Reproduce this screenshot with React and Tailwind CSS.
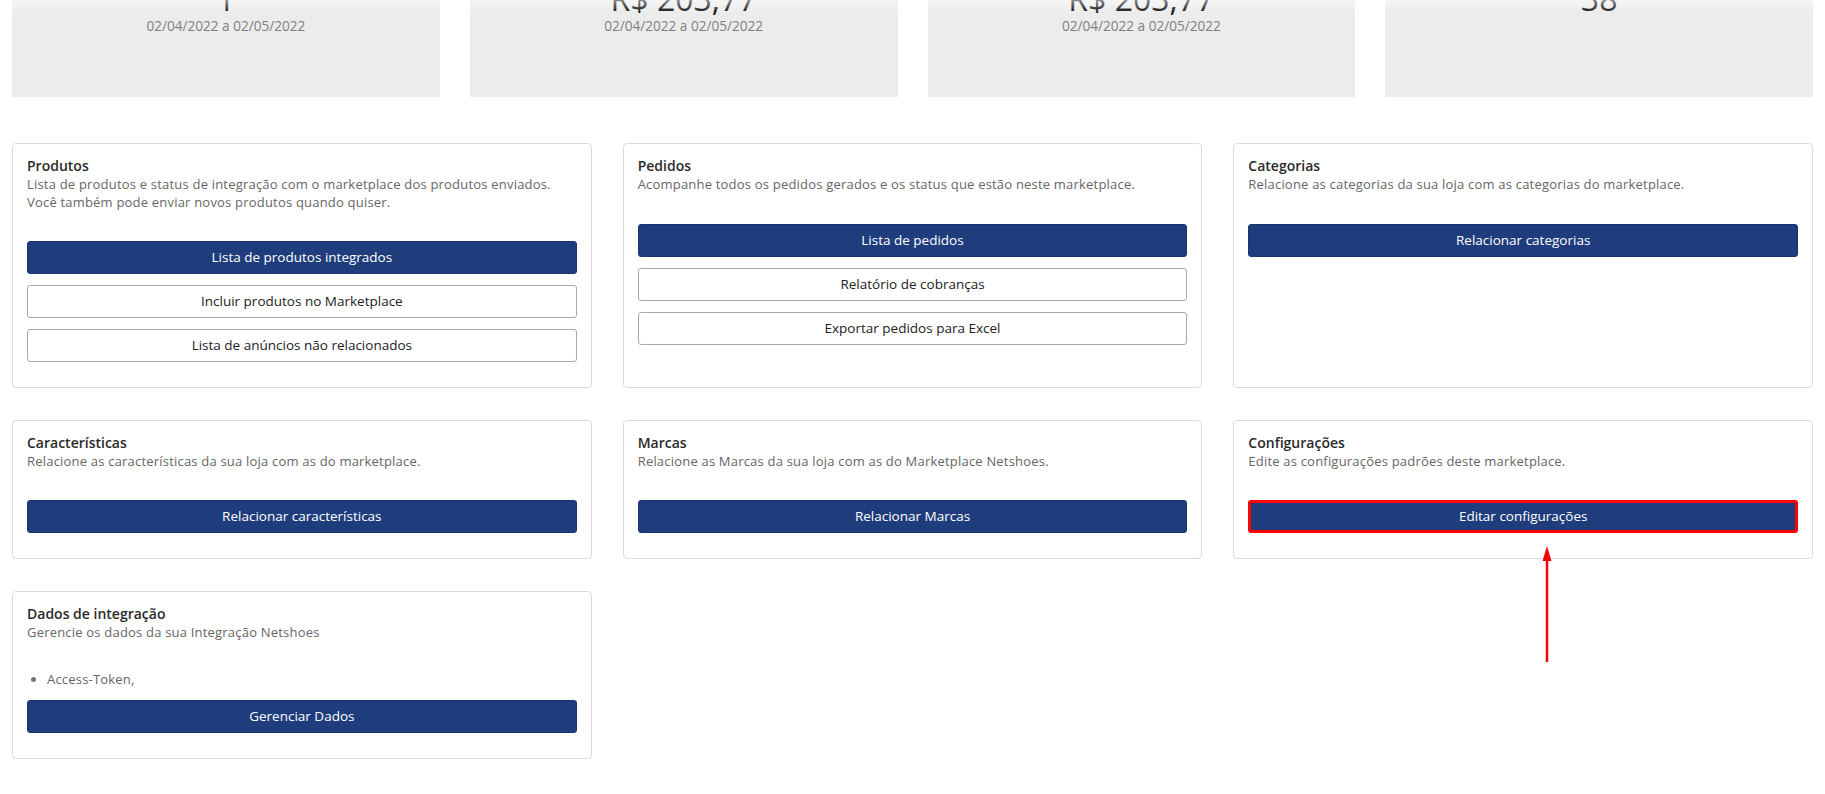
const stats = [
  { value: '1', period: '02/04/2022 a 02/05/2022' },
  { value: 'R$ 203,77', period: '02/04/2022 a 02/05/2022' },
  { value: 'R$ 203,77', period: '02/04/2022 a 02/05/2022' },
  { value: '38', period: '' }
];

function PrimaryButton({ children, highlight }) {
  return (
    <button
      className={`mb-[11px] flex h-[33px] w-full items-center justify-center rounded-[3px] bg-[#1f3d7c] text-[13.5px] text-white ${
        highlight ? 'border-[3px] border-[#ff0000]' : 'border border-[#1a3470]'
      }`}
    >
      {children}
    </button>
  );
}

function OutlineButton({ children }) {
  return (
    <button className="mb-[11px] flex h-[33px] w-full items-center justify-center rounded-[3px] border border-[#a9a9a9] bg-white text-[13.5px] text-[#222]">
      {children}
    </button>
  );
}

function ModuleCard({ title, lines, children, className = '' }) {
  return (
    <div className={`rounded-[4px] border border-[#dcdcdc] bg-white px-[14px] pt-[12px] pb-[14px] ${className}`}>
      <h3 className="text-[14px] leading-[20px] font-semibold text-[#2a2a2a]">{title}</h3>
      <p className="text-[13px] leading-[17.5px] tracking-[0.2px] text-[#666]">
        {lines.map((l, i) => (
          <span key={i} className="block">{l}</span>
        ))}
      </p>
      <div className="mt-[30px]">{children}</div>
    </div>
  );
}

export default function App() {
  return (
    <div className="relative min-h-[794px] overflow-hidden bg-white px-[12px] font-['Open_Sans',sans-serif]">
      <div className="pointer-events-none absolute inset-x-0 top-0 z-10 h-[12px] bg-linear-to-b from-white/50 to-white/0" />

      <div className="-mt-[40px] grid grid-cols-4 gap-[30px]">
        {stats.map((s, i) => (
          <div key={i} className="h-[137px] bg-[#ececec] pt-[21px] text-center">
            <div className="text-[32px] leading-[36px] text-[#1a1a1a]">{s.value}</div>
            <div className="text-[13.6px] leading-[17px] text-[#808080]">{s.period}</div>
          </div>
        ))}
      </div>

      <div className="mt-[46px] grid grid-cols-3 gap-x-[31px] gap-y-[31.5px]">
        <ModuleCard
          title="Produtos"
          lines={[
            'Lista de produtos e status de integração com o marketplace dos produtos enviados.',
            'Você também pode enviar novos produtos quando quiser.'
          ]}
        >
          <PrimaryButton>Lista de produtos integrados</PrimaryButton>
          <OutlineButton>Incluir produtos no Marketplace</OutlineButton>
          <OutlineButton>Lista de anúncios não relacionados</OutlineButton>
        </ModuleCard>

        <ModuleCard
          title="Pedidos"
          lines={['Acompanhe todos os pedidos gerados e os status que estão neste marketplace.']}
        >
          <PrimaryButton>Lista de pedidos</PrimaryButton>
          <OutlineButton>Relatório de cobranças</OutlineButton>
          <OutlineButton>Exportar pedidos para Excel</OutlineButton>
        </ModuleCard>

        <ModuleCard
          title="Categorias"
          lines={['Relacione as categorias da sua loja com as categorias do marketplace.']}
        >
          <PrimaryButton>Relacionar categorias</PrimaryButton>
        </ModuleCard>

        <ModuleCard
          title="Características"
          lines={['Relacione as características da sua loja com as do marketplace.']}
        >
          <PrimaryButton>Relacionar características</PrimaryButton>
        </ModuleCard>

        <ModuleCard
          title="Marcas"
          lines={['Relacione as Marcas da sua loja com as do Marketplace Netshoes.']}
        >
          <PrimaryButton>Relacionar Marcas</PrimaryButton>
        </ModuleCard>

        <ModuleCard
          title="Configurações"
          lines={['Edite as configurações padrões deste marketplace.']}
          className="relative"
        >
          <PrimaryButton highlight>Editar configurações</PrimaryButton>
          {/* annotation arrow */}
          <svg
            className="absolute left-[307px] top-[125px] z-20"
            width="12"
            height="116"
            viewBox="0 0 12 116"
          >
            <polygon points="6,0 1.5,15 10.5,15" fill="#ff0000" />
            <line x1="6" y1="12" x2="6" y2="116" stroke="#ff0000" strokeWidth="2.5" />
          </svg>
        </ModuleCard>

        <ModuleCard
          title="Dados de integração"
          lines={['Gerencie os dados da sua Integração Netshoes']}
        >
          <ul className="mb-[11px] list-disc pl-[20px] text-[13px] leading-[17.5px] tracking-[0.2px] text-[#666] marker:text-[#777]">
            <li>Access-Token,</li>
          </ul>
          <PrimaryButton>Gerenciar Dados</PrimaryButton>
        </ModuleCard>
      </div>
    </div>
  );
}
